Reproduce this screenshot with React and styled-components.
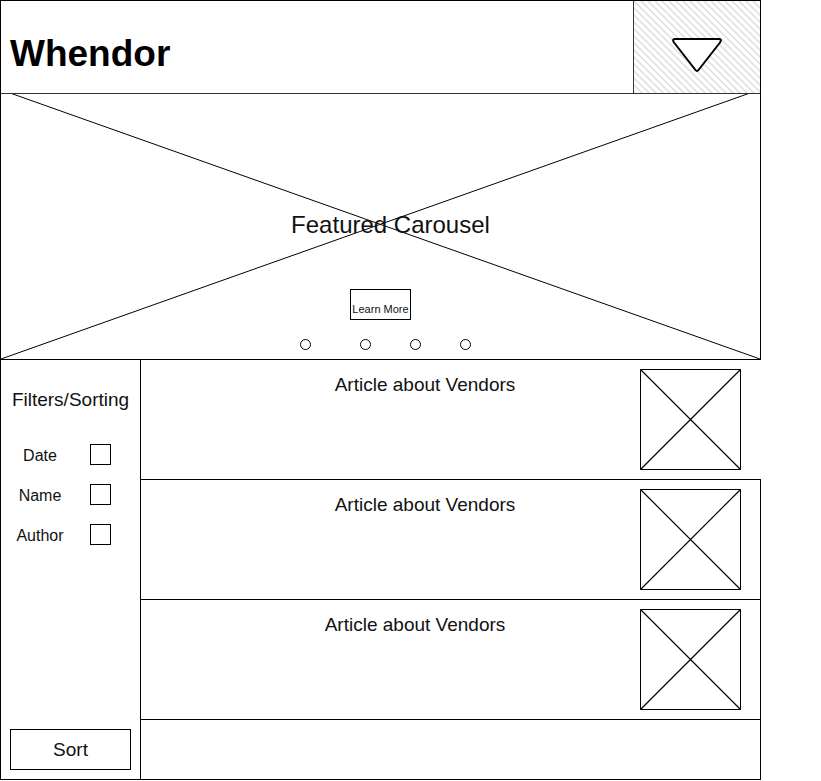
import React from "react";
import styled, { createGlobalStyle } from "styled-components";

const GlobalStyle = createGlobalStyle`
  *, *::before, *::after { box-sizing: border-box; }
  body {
    margin: 0;
    background: #fff;
    color: #111;
    font-family: "Liberation Sans", Arial, Helvetica, sans-serif;
  }
`;

const Page = styled.div`
  margin-right: 60px;
`;

const Header = styled.header`
  display: flex;
  height: 94px;
  border: 1px solid #000;
  border-bottom-color: #333;
`;

const Brand = styled.h1`
  flex: 1;
  margin: 0;
  padding: 32px 9px 0;
  color: #000;
  font-size: 37px;
  line-height: 42px;
`;

const MenuButton = styled.button`
  display: flex;
  width: 127px;
  padding: 0;
  border: 0;
  border-left: 1px solid #333;
  background: #fff;
`;

const Hatch = styled.svg`
  display: block;
  width: 100%;
  height: 100%;
`;

const Carousel = styled.section`
  position: relative;
  display: flex;
  flex-direction: column;
  align-items: center;
  height: 266px;
  border: 1px solid #000;
  border-top: 0;
`;

const Cross = styled.svg`
  position: absolute;
  inset: 0;
  width: 100%;
  height: 100%;
`;

const CarouselTitle = styled.h2`
  position: relative;
  margin: 117px 0 0;
  padding-left: 20px;
  font-size: 24px;
  line-height: 28px;
  font-weight: 400;
`;

const LearnMore = styled.button`
  position: relative;
  width: 61px;
  height: 31px;
  margin-top: 50px;
  padding: 9px 0 0;
  border: 1px solid #000;
  background: #fff;
  color: #111;
  font: 11px/13px "Liberation Sans", Arial, sans-serif;
  white-space: nowrap;
`;

const Dots = styled.div`
  position: relative;
  display: flex;
  gap: 39px;
  margin-top: 19px;
  padding-left: 10px;
`;

const Dot = styled.button`
  width: 11px;
  height: 11px;
  padding: 0;
  border: 1px solid #000;
  border-radius: 50%;
  background: #fff;

  &:first-child { margin-right: 10px; }
`;

const Body = styled.div`
  display: grid;
  grid-template-columns: 140px 1fr;
`;

const Sidebar = styled.aside`
  display: flex;
  flex-direction: column;
  padding: 29px 9px 9px;
  border-left: 1px solid #000;
  border-bottom: 1px solid #000;
`;

const SidebarTitle = styled.h2`
  margin: 0 0 33px;
  font-size: 19px;
  line-height: 22px;
  font-weight: 400;
  text-align: center;
`;

const Filter = styled.label`
  display: flex;
  align-items: center;
  height: 21px;
  margin-bottom: 19px;
  font-size: 16px;
  line-height: 20px;
`;

const FilterName = styled.span`
  width: 60px;
  margin-right: 20px;
  padding-top: 3px;
  text-align: center;
`;

const Checkbox = styled.input`
  appearance: none;
  width: 21px;
  height: 21px;
  margin: 0;
  border: 1px solid #000;
  background: #fff;

  &:checked { background: #000; }
`;

const SortButton = styled.button`
  width: 121px;
  height: 41px;
  margin-top: auto;
  padding: 0;
  border: 1px solid #000;
  background: #fff;
  color: #111;
  font: 19px/22px "Liberation Sans", Arial, sans-serif;
`;

const Articles = styled.main`
  border-left: 1px solid #000;
`;

const Article = styled.article`
  display: flex;
  height: 120px;
  padding: 9px ${(p) => (p.$open ? "20px" : "19px")} 0 0;
  border-right: ${(p) => (p.$open ? "0" : "1px solid #000")};
  border-bottom: 1px solid #000;
`;

const ArticleTitle = styled.h3`
  flex: 1;
  margin: 0;
  padding: 5px 0 0 ${(p) => (p.$shifted ? "49px" : "69px")};
  font-size: 19px;
  line-height: 22px;
  font-weight: 400;
  text-align: center;
`;

const Thumbnail = styled.svg`
  flex: none;
  width: 101px;
  height: 101px;
`;

const Footer = styled.footer`
  height: 60px;
  border-right: 1px solid #000;
  border-bottom: 1px solid #000;
`;

const filters = ["Date", "Name", "Author"];
const articles = [
  { id: 1, open: true },
  { id: 2 },
  { id: 3, shifted: true },
];

export default function App() {
  return (
    <>
      <GlobalStyle />
      <Page>
        <Header>
          <Brand>Whendor</Brand>
          <MenuButton aria-label="Open menu">
            <Hatch viewBox="0 0 126 92" aria-hidden="true">
              <defs>
                <pattern id="hatch" width="7" height="7" patternUnits="userSpaceOnUse">
                  <path d="M-2 -2L9 9M-2 5L2 9M5 -2L9 2" stroke="#dcdcdc" strokeWidth="1.400" />
                </pattern>
              </defs>
              <rect width="126" height="92" fill="url(#hatch)" />
              <path d="M41.500 38H84.500Q88.500 38 86 41.500L64.500 69Q63 71 61.500 69L40 41.500Q37.500 38 41.500 38Z" fill="#fff" stroke="#000" strokeWidth="2" />
            </Hatch>
          </MenuButton>
        </Header>

        <Carousel>
          <Cross viewBox="0 0 759 265" preserveAspectRatio="none" aria-hidden="true">
            <path d="M9 -1L759 265M749 -1L0 265" stroke="#000" fill="none" />
          </Cross>
          <CarouselTitle>Featured Carousel</CarouselTitle>
          <LearnMore>Learn More</LearnMore>
          <Dots>
            {[1, 2, 3, 4].map((n) => (
              <Dot key={n} aria-label={`Slide ${n}`} />
            ))}
          </Dots>
        </Carousel>

        <Body>
          <Sidebar>
            <SidebarTitle>Filters/Sorting</SidebarTitle>
            {filters.map((name) => (
              <Filter key={name}>
                <FilterName>{name}</FilterName>
                <Checkbox type="checkbox" />
              </Filter>
            ))}
            <SortButton>Sort</SortButton>
          </Sidebar>
          <Articles>
            {articles.map((a) => (
              <Article key={a.id} $open={a.open}>
                <ArticleTitle $shifted={a.shifted}>Article about Vendors</ArticleTitle>
                <Thumbnail viewBox="0 0 101 101" aria-hidden="true">
                  <path d="M0.500 0.500H100.500V100.500H0.500Z" fill="none" stroke="#000" />
                  <path d="M0.500 0.500L100.500 100.500M100.500 0.500L0.500 100.500" fill="none" stroke="#000" strokeWidth="1.200" />
                </Thumbnail>
              </Article>
            ))}
            <Footer />
          </Articles>
        </Body>
      </Page>
    </>
  );
}
